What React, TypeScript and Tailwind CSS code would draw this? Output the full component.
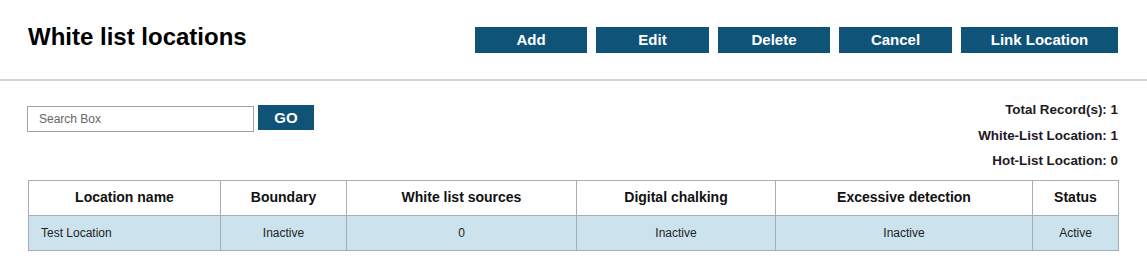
const actions = [
  { label: "Add", width: "w-[112px]" },
  { label: "Edit", width: "w-[113px]" },
  { label: "Delete", width: "w-[112px]" },
  { label: "Cancel", width: "w-[113px]" },
  { label: "Link Location", width: "w-[157px]" },
];

const columns = [
  { title: "Location name", width: "w-[192px]" },
  { title: "Boundary", width: "w-[126px]" },
  { title: "White list sources", width: "w-[230px]" },
  { title: "Digital chalking", width: "w-[199px]" },
  { title: "Excessive detection", width: "w-[257px]" },
  { title: "Status", width: "w-[86px]" },
];

const rows = [
  {
    name: "Test Location",
    boundary: "Inactive",
    sources: "0",
    chalking: "Inactive",
    excessive: "Inactive",
    status: "Active",
  },
];

const App = () => {
  return (
    <div className="min-h-[267px] w-full bg-white font-['Liberation_Sans',Arial,sans-serif] text-[#111]">
      {/* Header */}
      <header className="flex h-[81px] items-start justify-between border-b-2 border-[#d4d4d4] pl-[28px] pr-[29px] pt-[23px]">
        <h1 className="text-[24px] font-bold leading-[28px] text-black">
          White list locations
        </h1>
        <div className="mt-[4px] flex gap-[9px]">
          {actions.map((a) => (
            <button
              key={a.label}
              type="button"
              className={`${a.width} h-[26px] bg-[#0f5379] text-[15px] font-bold leading-[26px] text-white`}
            >
              {a.label}
            </button>
          ))}
        </div>
      </header>

      {/* Content */}
      <section className="pl-[28px] pr-[29px] pt-[16px]">
        <div className="flex items-start justify-between">
          <div className="flex items-start">
            <input
              type="text"
              placeholder="Search Box"
              className="-ml-px mt-[9px] h-[26px] w-[227px] border border-[#a3a3a3] px-[11px] text-[12px] text-[#333] outline-none placeholder:text-[#666]"
            />
            <button
              type="button"
              className="ml-[4px] mt-[8px] h-[25px] w-[56px] bg-[#0f5379] text-[15px] font-bold leading-[25px] text-white"
            >
              GO
            </button>
          </div>
          <div className="text-right text-[13.4px] font-bold leading-[25.5px] text-[#1c1a24]">
            <p>Total Record(s): 1</p>
            <p>White-List Location: 1</p>
            <p>Hot-List Location: 0</p>
          </div>
        </div>

        <table className="mt-[6px] w-[1090px] table-fixed border-collapse">
          <colgroup>
            {columns.map((c) => (
              <col key={c.title} className={c.width} />
            ))}
          </colgroup>
          <thead>
            <tr className="h-[35px]">
              {columns.map((c) => (
                <th
                  key={c.title}
                  className="border border-[#a6adb3] p-0 text-center text-[14px] font-bold text-[#111]"
                >
                  {c.title}
                </th>
              ))}
            </tr>
          </thead>
          <tbody>
            {rows.map((r) => (
              <tr key={r.name} className="h-[35px] bg-[#cce3ee] text-[12px] text-[#222]">
                <td className="border border-[#a6adb3] pl-[12px] text-left">{r.name}</td>
                <td className="border border-[#a6adb3] text-center">{r.boundary}</td>
                <td className="border border-[#a6adb3] text-center">{r.sources}</td>
                <td className="border border-[#a6adb3] text-center">{r.chalking}</td>
                <td className="border border-[#a6adb3] text-center">{r.excessive}</td>
                <td className="border border-[#a6adb3] text-center">{r.status}</td>
              </tr>
            ))}
          </tbody>
        </table>
      </section>
    </div>
  );
};

export default App;
